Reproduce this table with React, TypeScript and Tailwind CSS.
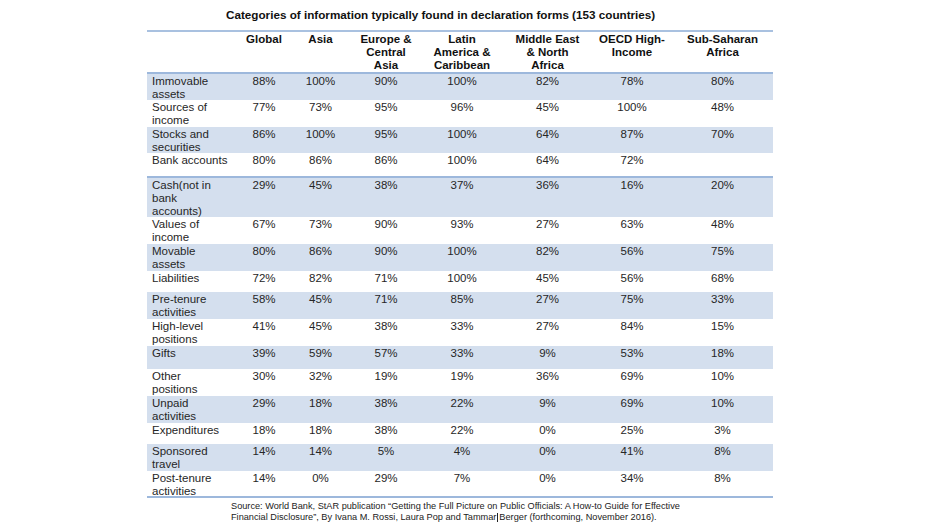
import React from 'react';

interface Row {
  label: string[];
  values: string[];
  h: string;
  band: boolean;
}

const columns = [
  ['Global'],
  ['Asia'],
  ['Europe &', 'Central', 'Asia'],
  ['Latin', 'America &', 'Caribbean'],
  ['Middle East', '& North', 'Africa'],
  ['OECD High-', 'Income'],
  ['Sub-Saharan', 'Africa'],
];

const topRows: Row[] = [
  { label: ['Immovable', 'assets'], values: ['88%', '100%', '90%', '100%', '82%', '78%', '80%'], h: 'h-[26px]', band: true },
  { label: ['Sources of', 'income'], values: ['77%', '73%', '95%', '96%', '45%', '100%', '48%'], h: 'h-[27px]', band: false },
  { label: ['Stocks and', 'securities'], values: ['86%', '100%', '95%', '100%', '64%', '87%', '70%'], h: 'h-[26px]', band: true },
  { label: ['Bank accounts'], values: ['80%', '86%', '86%', '100%', '64%', '72%', ''], h: 'h-[23px]', band: false },
];

const bottomRows: Row[] = [
  { label: ['Cash(not in', 'bank', 'accounts)'], values: ['29%', '45%', '38%', '37%', '36%', '16%', '20%'], h: 'h-[39px]', band: true },
  { label: ['Values of', 'income'], values: ['67%', '73%', '90%', '93%', '27%', '63%', '48%'], h: 'h-[27px]', band: false },
  { label: ['Movable', 'assets'], values: ['80%', '86%', '90%', '100%', '82%', '56%', '75%'], h: 'h-[27px]', band: true },
  { label: ['Liabilities'], values: ['72%', '82%', '71%', '100%', '45%', '56%', '68%'], h: 'h-[21px]', band: false },
  { label: ['Pre-tenure', 'activities'], values: ['58%', '45%', '71%', '85%', '27%', '75%', '33%'], h: 'h-[27px]', band: true },
  { label: ['High-level', 'positions'], values: ['41%', '45%', '38%', '33%', '27%', '84%', '15%'], h: 'h-[27px]', band: false },
  { label: ['Gifts'], values: ['39%', '59%', '57%', '33%', '9%', '53%', '18%'], h: 'h-[23px]', band: true },
  { label: ['Other', 'positions'], values: ['30%', '32%', '19%', '19%', '36%', '69%', '10%'], h: 'h-[27px]', band: false },
  { label: ['Unpaid', 'activities'], values: ['29%', '18%', '38%', '22%', '9%', '69%', '10%'], h: 'h-[27px]', band: true },
  { label: ['Expenditures'], values: ['18%', '18%', '38%', '22%', '0%', '25%', '3%'], h: 'h-[21px]', band: false },
  { label: ['Sponsored', 'travel'], values: ['14%', '14%', '5%', '4%', '0%', '41%', '8%'], h: 'h-[27px]', band: true },
  { label: ['Post-tenure', 'activities'], values: ['14%', '0%', '29%', '7%', '0%', '34%', '8%'], h: 'h-[25px]', band: false },
];

const gridCols = 'grid grid-cols-[91px_52px_61px_70px_82px_89px_80px_101px]';

function TableRow({ row }: { row: Row }) {
  return (
    <div className={`${gridCols} ${row.h} ${row.band ? 'bg-[#d4dfee]' : 'bg-white'}`}>
      <div className="pl-[5px] pt-[1px] whitespace-nowrap">
        {row.label.map(line => (
          <div key={line}>{line}</div>
        ))}
      </div>
      {row.values.map((v, i) => (
        <div key={i} className="pt-[1px] text-center">
          {v}
        </div>
      ))}
    </div>
  );
}

export default function App() {
  return (
    <div className="w-[939px] h-[527px] bg-white overflow-hidden font-['Liberation_Sans',Arial,sans-serif] text-[#262626]">
      {/* Title */}
      <div className="h-[30px] pl-[226px] pt-[8px] text-[11.7px] leading-[13px] font-bold text-[#111] whitespace-nowrap">
        Categories of information typically found in declaration forms (153 countries)
      </div>

      <div className="ml-[147px] w-[626px] text-[11.5px] leading-[13px]">
        <div className="h-[2px] bg-[#a9c1e0]" />
        <div className={`${gridCols} h-[40px] font-bold text-[#111]`}>
          <div />
          {columns.map(col => (
            <div key={col[0]} className="pt-[1px] text-center whitespace-nowrap">
              {col.map(line => (
                <div key={line}>{line}</div>
              ))}
            </div>
          ))}
        </div>
        <div className="h-[2px] bg-[#9db8dc]" />

        {topRows.map(r => (
          <TableRow key={r.label[0]} row={r} />
        ))}
        <div className="h-[2px] bg-[#9db8dc]" />
        {bottomRows.map(r => (
          <TableRow key={r.label[0]} row={r} />
        ))}
        <div className="h-[2px] bg-[#9db8dc]" />
      </div>

      {/* Source note */}
      <div className="pl-[231px] pt-[3px] text-[9.2px] leading-[10.5px] text-[#222] whitespace-nowrap">
        <div>
          Source: World Bank, StAR publication “Getting the Full Picture on Public Officials: A How-to Guide for Effective
        </div>
        <div>
          Financial Disclosure”, By Ivana M. Rossi, Laura Pop and Tammar
          <span className="inline-block w-[1px] h-[9px] bg-[#222] align-middle mx-[1px]" />
          Berger (forthcoming, November 2016).
        </div>
      </div>
    </div>
  );
}
